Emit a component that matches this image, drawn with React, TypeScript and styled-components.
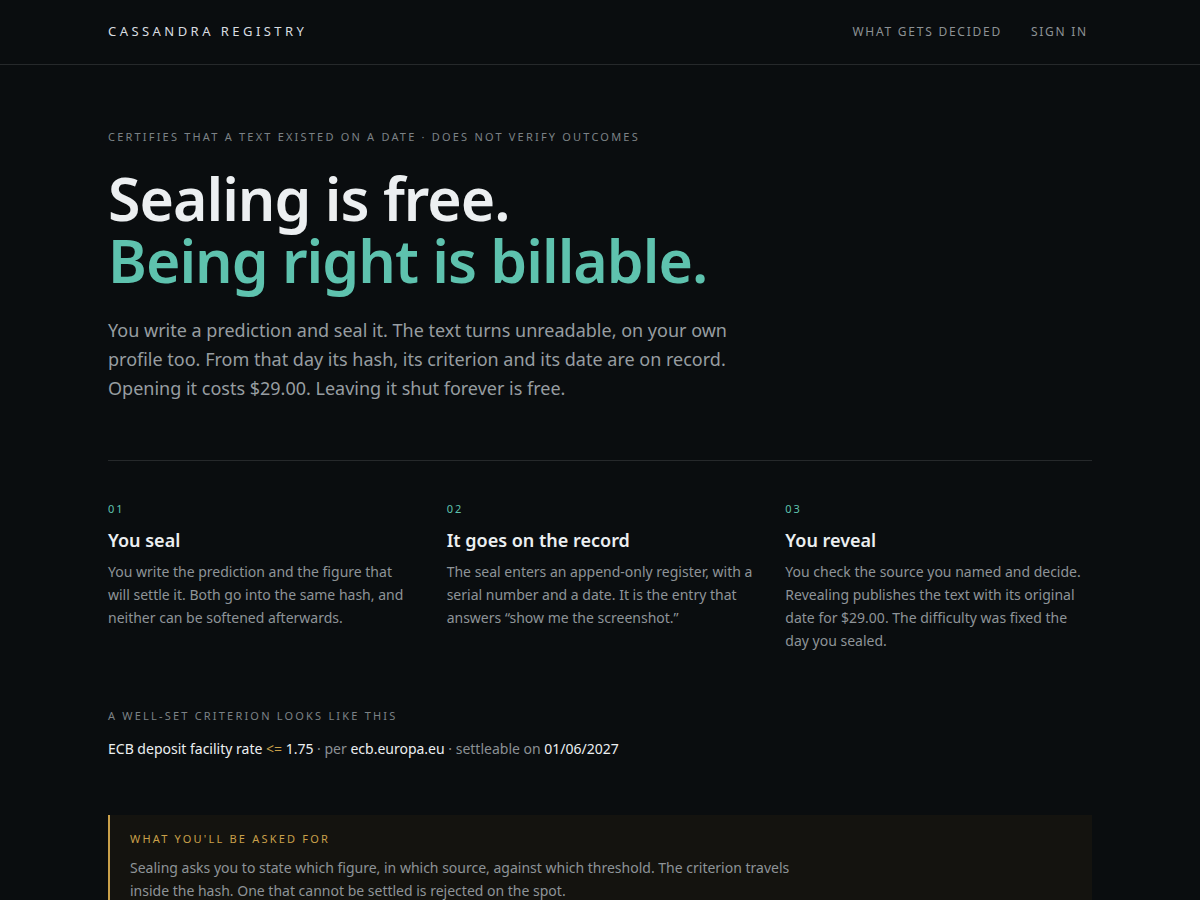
import React from "react";
import styled, { createGlobalStyle } from "styled-components";

const Global = createGlobalStyle`
  html, body { margin: 0; padding: 0; background: #0a0d0f; }
  body { font-family: "Noto Sans", "Open Sans", sans-serif; color: #e8ebed; -webkit-font-smoothing: antialiased; }
  * { box-sizing: border-box; }
`;

const Page = styled.div`
  min-height: 900px;
  background: #0a0d0f;
`;

const Header = styled.header`
  height: 65px;
  border-bottom: 1px solid #26292b;
`;

const Inner = styled.div`
  max-width: 984px;
  margin: 0 auto;
`;

const HeaderInner = styled(Inner)`
  height: 64px;
  padding-bottom: 2px;
  display: flex;
  align-items: center;
  justify-content: space-between;
`;

const Logo = styled.div`
  font-size: 13px;
  letter-spacing: 3.45px;
  color: #d9dde0;
`;

const Nav = styled.nav`
  display: flex;
  gap: 29px;
  padding-right: 4px;
`;

const NavLink = styled.a`
  font-size: 12px;
  letter-spacing: 1.75px;
  color: #8d9295;
  text-decoration: none;
`;

const Hero = styled.section`
  padding-top: 64px;
  padding-bottom: 57px;
  border-bottom: 1px solid #26292b;
`;

const Eyebrow = styled.div<{ $color?: string }>`
  font-size: 11px;
  letter-spacing: 2.2px;
  color: ${(p) => p.$color || "#7c8286"};
  text-transform: uppercase;
`;

const Title = styled.h1`
  margin: 23px 0 0;
  font-size: 59px;
  font-weight: 600;
  line-height: 62px;
  letter-spacing: -1px;
  color: #eceff1;
`;

const Accent = styled.span`
  display: block;
  color: #5ec2ae;
`;

const Lead = styled.p`
  margin: 25px 0 0;
  max-width: 640px;
  font-size: 18px;
  line-height: 29px;
  color: #979da1;
`;

const Steps = styled.section`
  display: grid;
  grid-template-columns: repeat(3, 1fr);
  column-gap: 32px;
  padding-top: 40px;
`;

const Step = styled.div``;

const StepNum = styled.div`
  font-size: 11px;
  letter-spacing: 2px;
  color: #5ec2ae;
`;

const StepTitle = styled.h3`
  margin: 11px 0 0;
  font-size: 18px;
  font-weight: 600;
  color: #eceff1;
  line-height: 26px;
`;

const StepBody = styled.p`
  margin: 7px 0 0;
  font-size: 14px;
  line-height: 23px;
  color: #8e9498;
`;

const Criterion = styled.section`
  padding-top: 56px;
`;

const CritLine = styled.div`
  margin-top: 16px;
  font-size: 14px;
  line-height: 20px;
  color: #8a9094;
`;

const Strong = styled.span`
  color: #eceff1;
`;

const Op = styled.span`
  color: #c9a04a;
`;

const Callout = styled.section`
  margin-top: 56px;
  background: #14130f;
  border-left: 2px solid #c9a04a;
  padding: 16px 20px 14px;
`;

const CalloutBody = styled.p`
  margin: 10px 0 0;
  max-width: 700px;
  font-size: 14px;
  line-height: 23px;
  color: #8e9498;
`;

export default function App() {
  return (
    <Page>
      <Global />
      <Header>
        <HeaderInner>
          <Logo>CASSANDRA REGISTRY</Logo>
          <Nav>
            <NavLink href="#">WHAT GETS DECIDED</NavLink>
            <NavLink href="#">SIGN IN</NavLink>
          </Nav>
        </HeaderInner>
      </Header>
      <Inner>
        <Hero>
          <Eyebrow>Certifies that a text existed on a date · does not verify outcomes</Eyebrow>
          <Title>
            Sealing is free.
            <Accent>Being right is billable.</Accent>
          </Title>
          <Lead>
            You write a prediction and seal it. The text turns unreadable, on your own profile too. From that day its hash, its criterion and its date are on record. Opening it costs $29.00. Leaving it shut forever is free.
          </Lead>
        </Hero>
        <Steps>
          <Step>
            <StepNum>01</StepNum>
            <StepTitle>You seal</StepTitle>
            <StepBody>
              You write the prediction and the figure that will settle it. Both go into the same hash, and neither can be softened afterwards.
            </StepBody>
          </Step>
          <Step>
            <StepNum>02</StepNum>
            <StepTitle>It goes on the record</StepTitle>
            <StepBody>
              The seal enters an append-only register, with a serial number and a date. It is the entry that answers “show me the screenshot.”
            </StepBody>
          </Step>
          <Step>
            <StepNum>03</StepNum>
            <StepTitle>You reveal</StepTitle>
            <StepBody>
              You check the source you named and decide. Revealing publishes the text with its original date for $29.00. The difficulty was fixed the day you sealed.
            </StepBody>
          </Step>
        </Steps>
        <Criterion>
          <Eyebrow>A well-set criterion looks like this</Eyebrow>
          <CritLine>
            <Strong>ECB deposit facility rate</Strong> <Op>&lt;=</Op> <Strong>1.75</Strong> · per{" "}
            <Strong>ecb.europa.eu</Strong> · settleable on <Strong>01/06/2027</Strong>
          </CritLine>
        </Criterion>
        <Callout>
          <Eyebrow $color="#c9a04a">What you'll be asked for</Eyebrow>
          <CalloutBody>
            Sealing asks you to state which figure, in which source, against which threshold. The criterion travels inside the hash. One that cannot be settled is rejected on the spot.
          </CalloutBody>
        </Callout>
      </Inner>
    </Page>
  );
}
